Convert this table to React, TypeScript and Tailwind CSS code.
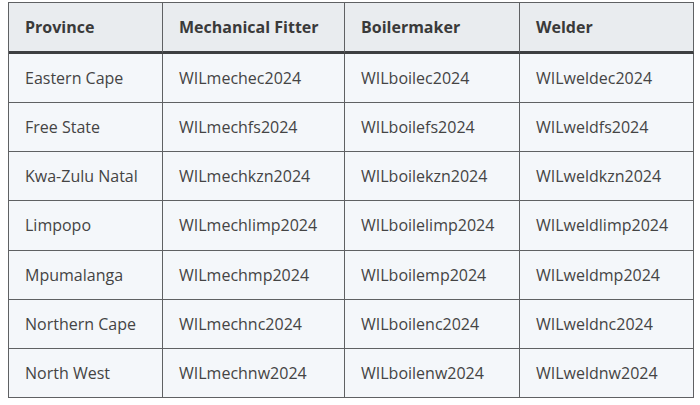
import React from "react";

const rows: [string, string, string, string][] = [
  ["Eastern Cape", "WILmechec2024", "WILboilec2024", "WILweldec2024"],
  ["Free State", "WILmechfs2024", "WILboilefs2024", "WILweldfs2024"],
  ["Kwa-Zulu Natal", "WILmechkzn2024", "WILboilekzn2024", "WILweldkzn2024"],
  ["Limpopo", "WILmechlimp2024", "WILboilelimp2024", "WILweldlimp2024"],
  ["Mpumalanga", "WILmechmp2024", "WILboilemp2024", "WILweldmp2024"],
  ["Northern Cape", "WILmechnc2024", "WILboilenc2024", "WILweldnc2024"],
  ["North West", "WILmechnw2024", "WILboilenw2024", "WILweldnw2024"],
];

const headers = ["Province", "Mechanical Fitter", "Boilermaker", "Welder"];

export default function App() {
  return (
    <div
      className="w-[700px] h-[405px] bg-white pl-[8px] pt-[2px]"
      style={{ fontFamily: '"Open Sans", "Noto Sans", sans-serif' }}
    >
      <div className="grid w-[686px] grid-cols-[154px_182px_175px_174px] border-l border-t border-[#5f6163]">
        {headers.map((h) => (
          <div
            key={h}
            className="h-[51px] flex items-center pl-4 bg-[#e9ecef] border-r border-[#5f6163] border-b-[3px] border-b-[#3d3f41] text-[16px] font-bold text-[#3a3a3a]"
          >
            {h}
          </div>
        ))}
        {rows.map((r) =>
          r.map((c, i) => (
            <div
              key={r[0] + i}
              className="h-[49.15px] flex items-center pl-4 bg-[#f4f7fa] border-r border-b border-[#5f6163] text-[16px] text-[#444444]"
            >
              {c}
            </div>
          ))
        )}
      </div>
    </div>
  );
}
